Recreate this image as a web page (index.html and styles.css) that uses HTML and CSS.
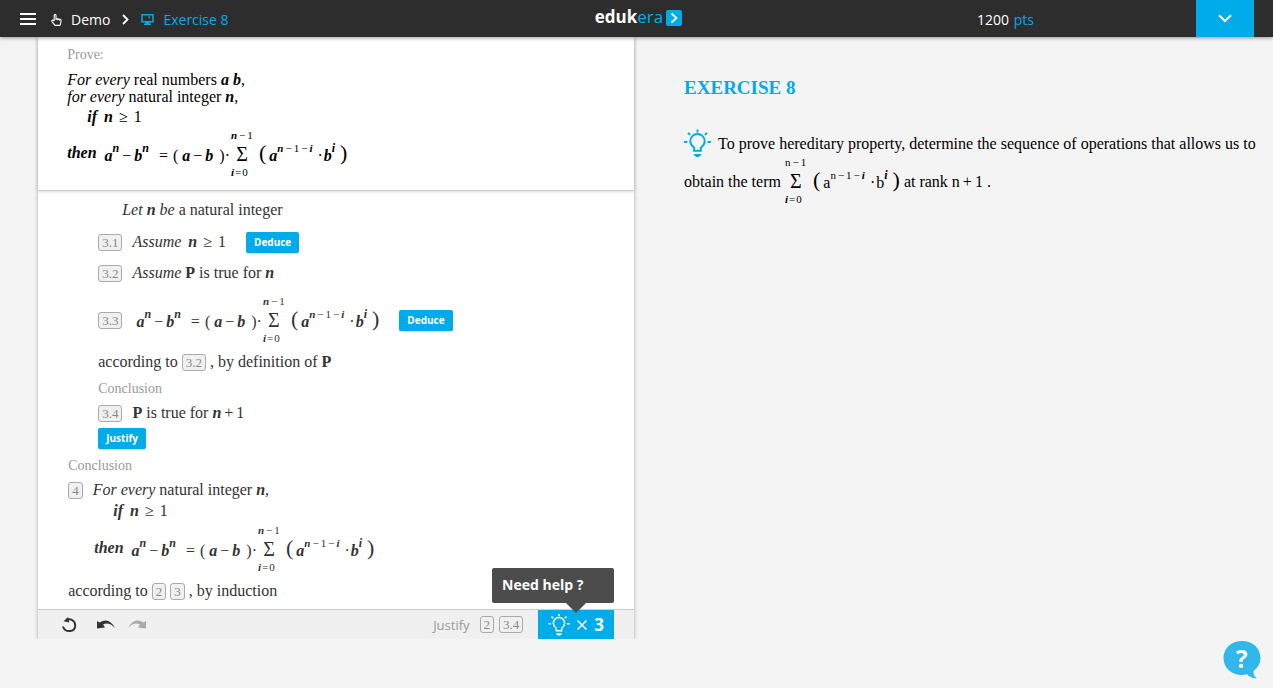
FILE: index.html
```html
<!DOCTYPE html>
<html lang="en">
<head>
<meta charset="utf-8">
<title>Edukera - Exercise 8</title>
<meta name="viewport" content="width=device-width, initial-scale=1">
<link rel="stylesheet" href="styles.css">
</head>
<body>
<header class="topbar">
  <nav class="crumbs">
    <button class="icon-btn menu" aria-label="Menu">
      <svg width="16" height="14" viewBox="0 0 16 14"><path d="M0 1h16M0 6h16M0 11h16" stroke="#fff" stroke-width="2"/></svg>
    </button>
    <svg class="hand" width="11" height="12" viewBox="0 0 11 12" fill="none" stroke="#fff" stroke-width="1.1" stroke-linejoin="round"><path d="M3.200 7V1.400a.9.900 0 0 1 1.800 0V4.600l4 .7q1.200.200 1.100 1.300L9.600 9.300 9 11.400H4L1 7.600Q.4 6.500 1.300 6.200T3.200 7M5 4.600V6M6.800 4.900V6.300M8.500 5.200V6.500"/></svg>
    <a class="crumb" href="#demo">Demo</a>
    <svg class="sep" width="7" height="11" viewBox="0 0 7 11" fill="none" stroke="#fff" stroke-width="1.800"><path d="M1 1l4.500 4.500L1 10"/></svg>
    <svg class="screen" width="13" height="11" viewBox="0 0 13 11"><path d="M1 .8h11v7H1z" fill="none" stroke="#00abe9" stroke-width="1.500"/><path d="M4.500 8h4v1.500H10V11H3V9.500h1.500zM7 2.500h2v2H8z" fill="#00abe9"/></svg>
    <a class="crumb current" href="#exercise">Exercise 8</a>
  </nav>
  <a class="logo" href="#home"><b>eduk</b><span>era</span>
    <svg width="16" height="16" viewBox="0 0 16 16"><rect width="16" height="16" rx="2" fill="#00abe9"/><path d="M5.500 3.500l5 4.500-5 4.500" fill="none" stroke="#fff" stroke-width="1.800"/></svg>
  </a>
  <div class="account">
    <div class="points">1200 <span>pts</span></div>
    <button class="drop" aria-label="Open menu">
      <svg width="14" height="9" viewBox="0 0 14 9"><path d="M1 1.200l6 5.800 6-5.800" fill="none" stroke="#fff" stroke-width="2"/></svg>
    </button>
  </div>
</header>

<main class="page">
  <section class="panel">
    <div class="prove">
      <h2 class="label">Prove:</h2>
      <p><i>For every</i> real numbers <var>a b</var>,</p>
      <p><i>for every</i> natural integer <var>n</var>,</p>
      <p class="cond"><var>if</var><var>n</var><span class="rel">≥</span><span>1</span></p>
      <div class="row formula-row">
        <var class="then">then</var>
        <span class="math"><var>a</var><var class="sup">n</var><span class="op">−</span><var>b</var><var class="sup">n</var><span class="eq">=</span><span class="open">(</span><var>a</var><span class="op">−</span><var>b</var><span class="close">)</span><span class="dot">·</span><span class="sum"><span class="limit"><var>n</var><span>−</span><span>1</span></span><span class="sigma">Σ</span><span class="limit low"><var>i</var><span>=</span><span>0</span></span></span><span class="big">(</span><var>a</var><span class="sup chain"><var>n</var><span>−</span><span>1</span><span>−</span><var>i</var></span><span class="dot mid">·</span><var>b</var><var class="sup">i</var><span class="big end">)</span></span>
      </div>
    </div>

    <div class="steps">
      <div class="row let"><p><i>Let</i> <var>n</var> <i>be</i> a natural integer</p></div>
      <div class="row assume">
        <span class="ref">3.1</span><i>Assume</i><p class="cond inline"><var>n</var><span class="rel">≥</span><span>1</span></p>
        <button class="action after">Deduce</button>
      </div>
      <div class="row second"><span class="ref">3.2</span><p><i>Assume</i> <b>P</b> is true for <var>n</var></p></div>
      <div class="row third">
        <span class="ref">3.3</span>
        <span class="math lead"><var>a</var><var class="sup">n</var><span class="op">−</span><var>b</var><var class="sup">n</var><span class="eq">=</span><span class="open">(</span><var>a</var><span class="op">−</span><var>b</var><span class="close">)</span><span class="dot">·</span><span class="sum"><span class="limit"><var>n</var><span>−</span><span>1</span></span><span class="sigma">Σ</span><span class="limit low"><var>i</var><span>=</span><span>0</span></span></span><span class="big">(</span><var>a</var><span class="sup chain"><var>n</var><span>−</span><span>1</span><span>−</span><var>i</var></span><span class="dot mid">·</span><var>b</var><var class="sup">i</var><span class="big end">)</span></span>
        <button class="action after">Deduce</button>
      </div>
      <div class="row according"><span>according to</span><span class="ref tight">3.2</span><p>, by definition of <b>P</b></p></div>
      <h3 class="row label nested">Conclusion</h3>
      <div class="row goal"><span class="ref">3.4</span><p><b>P</b> is true for <var>n</var><span class="plus">+</span>1</p></div>
      <div class="row justify-row"><button class="action">Justify</button></div>
      <h3 class="row label outer">Conclusion</h3>
      <div class="row result"><span class="ref">4</span><p><i>For every</i> natural integer <var>n</var>,</p></div>
      <p class="cond deep"><var>if</var><var>n</var><span class="rel">≥</span><span>1</span></p>
      <div class="row final">
        <var class="then">then</var>
        <span class="math"><var>a</var><var class="sup">n</var><span class="op">−</span><var>b</var><var class="sup">n</var><span class="eq">=</span><span class="open">(</span><var>a</var><span class="op">−</span><var>b</var><span class="close">)</span><span class="dot">·</span><span class="sum"><span class="limit"><var>n</var><span>−</span><span>1</span></span><span class="sigma">Σ</span><span class="limit low"><var>i</var><span>=</span><span>0</span></span></span><span class="big">(</span><var>a</var><span class="sup chain"><var>n</var><span>−</span><span>1</span><span>−</span><var>i</var></span><span class="dot mid">·</span><var>b</var><var class="sup">i</var><span class="big end">)</span></span>
      </div>
      <div class="row induction"><span>according to</span><span class="ref tight">2</span><span class="ref tight">3</span><p>, by induction</p></div>
    </div>

    <footer class="toolbar">
      <button class="icon-btn" aria-label="Reset"><svg width="16" height="16" viewBox="0 0 16 16"><path d="M5 2.800C10 .8 14.200 4 14.200 8.500 14.200 15.500 4 16 2 9.500" fill="none" stroke="#333" stroke-width="2"/><path d="M2.500 4.200L7.200 0l1 5.500z" fill="#333"/></svg></button>
      <button class="icon-btn undo" aria-label="Undo"><svg width="18" height="9" viewBox="0 0 18 9"><path d="M0 1l2.500 1.500Q12-3.500 18 8 12 1.500 6 4.500L8 7.500 0 8.500z" fill="#333"/></svg></button>
      <button class="icon-btn redo" aria-label="Redo"><svg width="18" height="9" viewBox="0 0 18 9"><path d="M18 1l-2.500 1.500Q6-3.500 0 8 6 1.500 12 4.500L10 7.500l8 1z" fill="#aaa"/></svg></button>
      <span class="justify">Justify</span>
      <span class="ref bare">2</span><span class="ref bare">3.4</span>
      <div class="help">
        <button class="hint">
          <svg width="22" height="22" viewBox="0 0 28 29"><use href="#bulb"/></svg>
          <svg width="12" height="12" viewBox="0 0 12 12"><path d="M1.500 1.500l9 9M10.500 1.500l-9 9" stroke="#fff" stroke-width="1.500"/></svg>
          <b>3</b>
        </button>
        <div class="tooltip" role="tooltip">Need help ?</div>
      </div>
    </footer>
  </section>

  <aside class="lesson">
    <h1>EXERCISE 8</h1>
    <p class="advice">
      <svg class="bulb" width="27" height="29" viewBox="0 0 28 29"><g id="bulb" fill="none" stroke="currentColor" stroke-width="2"><path d="M10.500 22v-3.200C7.500 16.500 6.500 15 6.500 12.200a7.500 7.500 0 0 1 15 0c0 2.800-1 4.300-4 6.600V22z"/><path d="M14 0v3M0 13h3.500M24.500 13H28M4 3.500l2.500 2M24 3.500l-2.500 2"/><path d="M9.500 25.500h9l-3 3h-3z" fill="currentColor" stroke="none"/></g></svg>To prove hereditary property, determine the sequence of operations that allows us to obtain the term
      <span class="math upright"><span class="sum"><span class="limit"><span>n</span><span>−</span><span>1</span></span><span class="sigma">Σ</span><span class="limit low"><var>i</var><span>=</span><span>0</span></span></span><span class="big">(</span><span>a</span><span class="sup chain"><span>n</span><span>−</span><span>1</span><span>−</span><var>i</var></span><span class="dot mid">·</span><span>b</span><var class="sup">i</var><span class="big end">)</span></span>
      at rank n<span class="plus">+</span>1 .
    </p>
  </aside>
</main>

<button class="support" aria-label="Support">
  <svg width="38" height="38" viewBox="0 0 38 38"><path d="M19 0C8.500 0 .5 7.200.5 17S8.500 34 19 34q2.500 0 5-.7 4 4.500 10 4-4-2-3.500-7.300Q37.500 25 37.500 17C37.500 7.200 29.500 0 19 0z" fill="#31b8ea"/></svg>
  <span>?</span>
</button>
</body>
</html>
```
FILE: styles.css
```css
* { box-sizing: border-box; }
body {
  margin: 0;
  background: #f4f4f4;
  color: #000;
  font: 16px/18px "Liberation Serif", serif;
}
p, h1, h2, h3 { margin: 0; }
button {
  border: 0;
  padding: 0;
  color: inherit;
  background: none;
  font-family: "Open Sans", sans-serif;
  cursor: pointer;
}
a { color: inherit; text-decoration: none; }
svg { flex: none; }
var { font-style: italic; font-weight: bold; }

/* Top bar */
.topbar {
  position: sticky;
  top: 0;
  z-index: 2;
  display: grid;
  grid-template-columns: 1fr auto 1fr;
  height: 37px;
  background: #2d2d2d;
  color: #fff;
  font: 14px/20px "Open Sans", sans-serif;
  box-shadow: 0 1px 4px rgba(0, 0, 0, .4);
}
.crumbs { display: flex; align-items: center; padding: 2px 0 0 20px; }
.icon-btn { display: flex; }
.hand { margin: 0 9px 0 15px; }
.sep { margin: 0 12px 0 12px; }
.screen { margin-right: 9px; }
.current, .points span, .logo span { color: #00abe9; }
.logo { display: flex; align-items: center; padding: 0 0 3px 4px; font-size: 17px; }
.logo svg { margin: 2px 0 0 3px; }
.account { display: flex; justify-content: end; padding-right: 19px; }
.points { padding: 10px 162px 0 0; }
.points span { margin-left: 1px; }
.drop {
  display: flex;
  align-items: center;
  justify-content: center;
  width: 58px;
  background: #00abe9;
}

/* Page columns */
.page {
  display: grid;
  grid-template-columns: 596fr 579fr;
  column-gap: 50px;
  padding: 0 10px 0 3%;
}
.panel {
  background: #fff;
  box-shadow: 0 1px 4px rgba(0, 0, 0, .3);
}
.prove {
  padding: 9px 29px;
  border-bottom: 1px solid #ccc;
  line-height: 17px;
  box-shadow: 0 1px 3px rgba(0, 0, 0, .15);
}
.label { color: #999; font-size: 14px; font-weight: normal; }
.prove .label { margin-bottom: 7px; line-height: 18px; }
.row { display: flex; align-items: center; }
.cond { display: flex; align-items: center; min-height: 22px; padding-left: 20px; white-space: pre; }
.cond var + var { margin-left: 7px; }
.cond .rel { margin: 0 6px; }
.cond.inline { padding-left: 7px; }
.formula-row { min-height: 54px; }
.then { margin-right: 8px; padding-bottom: 3px; }

/* Formulas */
.math { display: inline-flex; align-items: center; line-height: 18px; vertical-align: middle; }
.math > var, .math > span { padding-top: 3px; }
.math .sup { padding: 0 0 13px; font-size: 12px; }
.op { margin: 0 3px; }
.eq { margin: 0 5px 0 10px; }
.open { margin-right: 4px; }
.close { margin-left: 6px; }
.dot { margin: 0 1px 0 0; }
.math .mid { margin: 0 1px 0 5px; }
.math .sum { display: flex; flex-direction: column; width: 22px; padding: 0; }
.limit { display: flex; gap: 2px; font-size: 11px; line-height: 13px; }
.sigma { align-self: center; font-size: 20px; line-height: 24px; }
.low { gap: 1px; }
.math .chain { display: flex; gap: 2px; font-size: 11px; }
.math .big { margin: 0 3px 0 6px; padding: 0 0 3px; font-size: 22px; line-height: 22px; }
.math .end { margin: 0 0 0 5px; }
.plus { margin: 0 3px; }

/* Proof steps */
.steps { padding: 0 30px 4px; color: #333; }
.let { min-height: 38px; padding-left: 54px; }
.assume { min-height: 26px; padding-left: 30px; }
.second { min-height: 36px; padding-left: 30px; }
.third { min-height: 58px; padding-left: 30px; }
.according { min-height: 26px; padding-left: 30px; }
.nested { min-height: 26px; padding: 2px 0 0 30px; }
.goal { min-height: 24px; padding-left: 30px; }
.justify-row { min-height: 26px; padding-left: 30px; }
.outer { min-height: 28px; padding-top: 2px; }
.result { min-height: 22px; }
.deep { padding-left: 45px; min-height: 20px; }
.final { min-height: 56px; padding-left: 26px; }
.induction { min-height: 28px; }
.lead { margin-left: 4px; }
.ref {
  margin-right: 10px;
  padding: 0 3px;
  border: 1px solid #aaa;
  border-radius: 3px;
  background: #f0f0f0;
  color: #888;
  font-size: 13px;
  line-height: 15px;
}
.tight { margin: 0 0 0 4px; }
.tight + p { margin-left: 4px; }
.action {
  height: 21px;
  padding: 0 8px;
  border-radius: 2px;
  background: #00abe9;
  color: #fff;
  font-size: 10px;
  font-weight: bold;
  box-shadow: 0 1px 1px rgba(0, 0, 0, .15);
}
.after { margin-left: 20px; }

/* Toolbar */
.toolbar {
  display: flex;
  align-items: center;
  height: 30px;
  padding: 0 20px 0 23px;
  border-top: 1px solid #ccc;
  background: #f0f0f0;
}
.undo { margin-left: 20px; }
.redo { margin-left: 13px; }
.justify {
  margin: 0 10px 0 auto;
  color: #999;
  font: 13px/18px "Open Sans", sans-serif;
}
.bare { margin-right: 5px; }
.help { position: relative; align-self: stretch; margin-left: 10px; }
.hint {
  display: flex;
  align-items: center;
  gap: 6px;
  height: 100%;
  padding: 0 10px;
  background: #00abe9;
  color: #fff;
  font-size: 17px;
}
.tooltip {
  position: absolute;
  right: 0;
  bottom: 36px;
  width: 122px;
  padding: 8px 10px 9px;
  border-radius: 2px;
  background: #4c4c4c;
  color: #fff;
  font: bold 14px/18px "Open Sans", sans-serif;
}
.tooltip::after {
  content: "";
  position: absolute;
  top: 100%;
  left: 74px;
  border: 10px solid transparent;
  border-top-color: #4c4c4c;
  border-bottom: 0;
}

/* Lesson */
.lesson h1 { margin: 40px 0 30px; color: #00abe9; font-size: 19px; line-height: 22px; }
.advice { line-height: 20px; }
.bulb { margin: 0 7px 4px 0; color: #00abe9; vertical-align: middle; }
.upright { margin: -6px 0 -1px; }

.support { position: fixed; right: 12px; bottom: 9px; display: grid; place-items: center; color: #fff; }
.support > * { grid-area: 1 / 1; }
.support span { padding-bottom: 4px; font-size: 25px; font-weight: bold; line-height: 30px; }
```
